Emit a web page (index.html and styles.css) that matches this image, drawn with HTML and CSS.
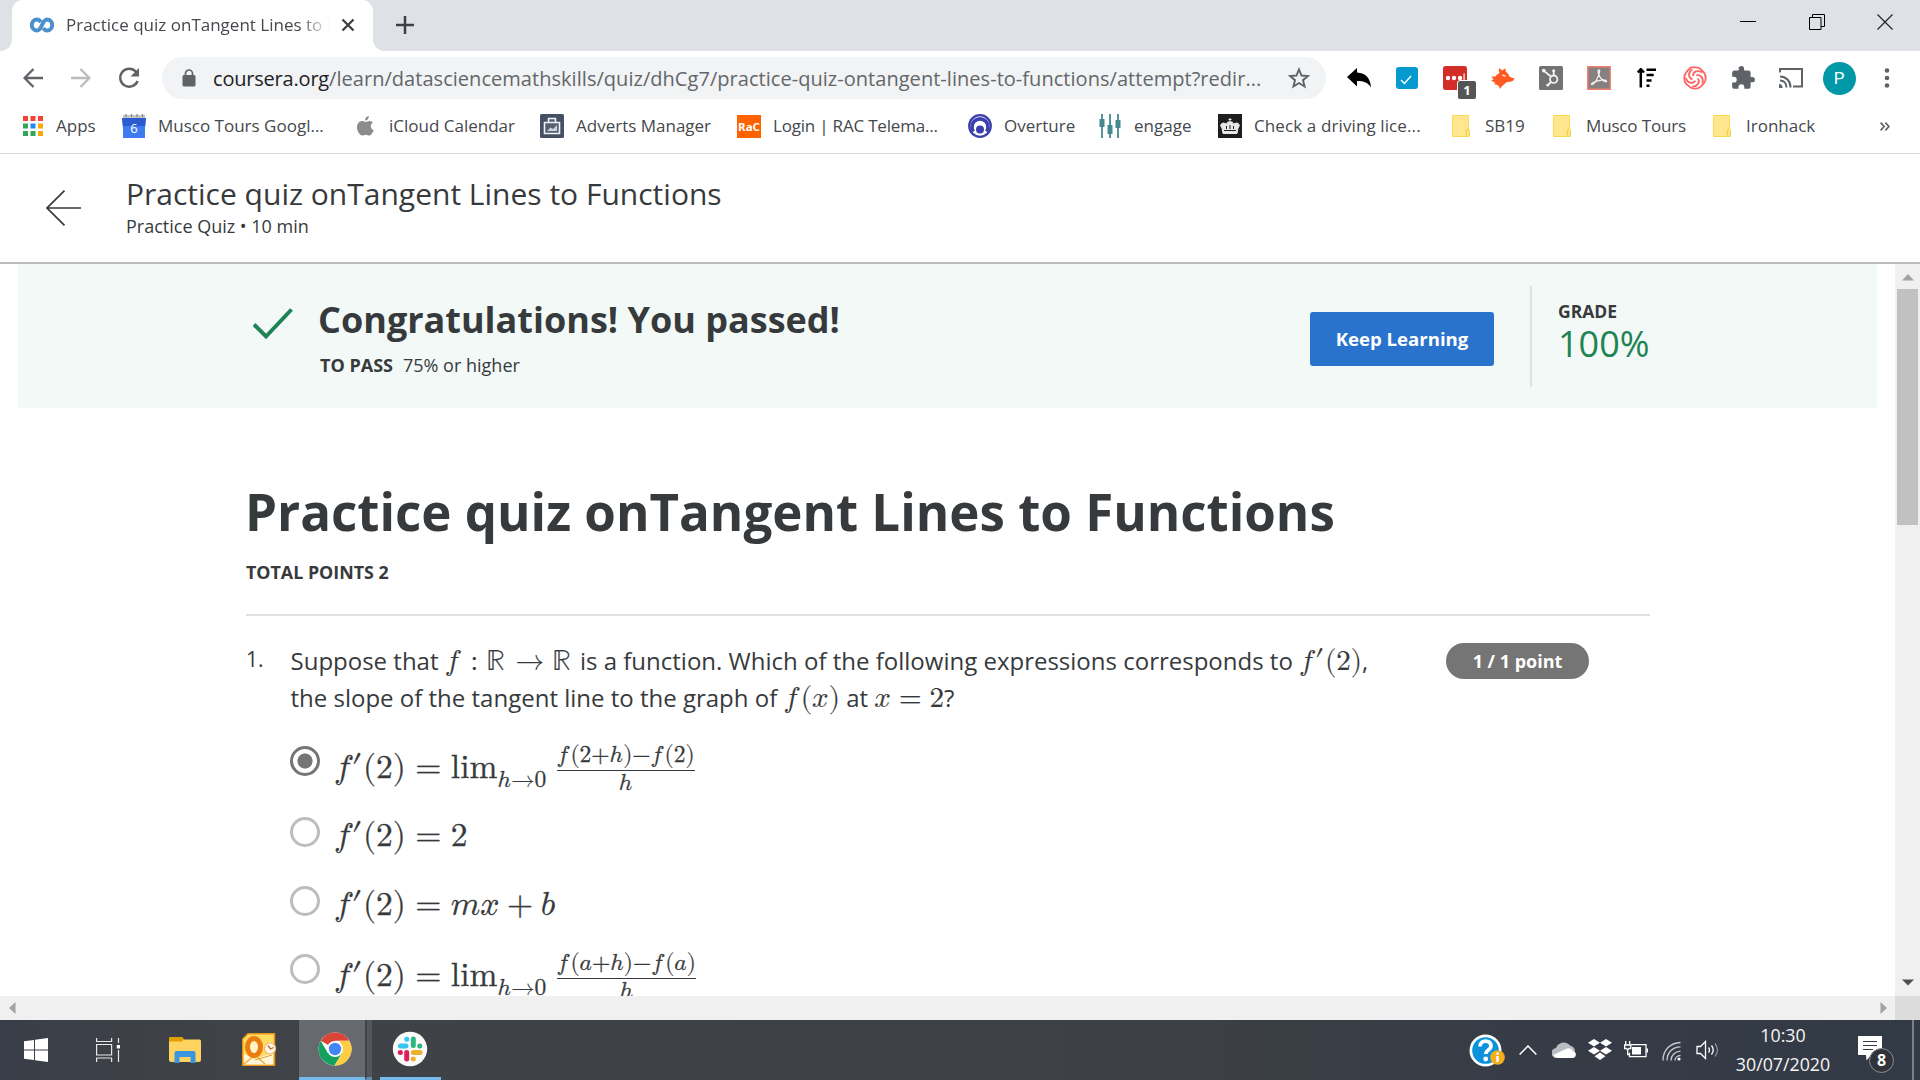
FILE: index.html
```html
<!DOCTYPE html>
<html lang="en">
<head>
<meta charset="utf-8">
<title>Practice quiz onTangent Lines to Functions</title>
<link rel="stylesheet" href="styles.css">
</head>
<body>
<div class="screen">

<header class="tabstrip">
  <div class="tab">
    <svg class="fav" width="24" height="16" viewBox="0 0 24 16" fill="none" stroke="#4a90cd" stroke-width="4"><path d="M11 5C9.500 3 8.500 2.400 7 2.400a5.200 5.600 0 0 0 0 11.200C12 13.600 12 2.400 17 2.400a5.200 5.600 0 0 1 0 11.200c-1.600 0-2.600-.7-3.800-2.400"/></svg>
    <span class="tab-title">Practice quiz onTangent Lines to F</span>
    <svg width="14" height="14" viewBox="0 0 14 14" stroke="#3c4043" stroke-width="2.300"><path d="M1.500 1.500l11 11M12.500 1.500l-11 11"/></svg>
  </div>
  <svg class="plus" width="18" height="18" viewBox="0 0 18 18" stroke="#3c4043" stroke-width="2.500"><path d="M9 0v18M0 9h18"/></svg>
  <div class="wincontrols">
    <svg width="16" height="16" viewBox="0 0 16 16" stroke="#000" fill="none"><path d="M0 7.500h16"/></svg>
    <svg width="16" height="16" viewBox="0 0 16 16" stroke="#000" fill="none"><path d="M.5 3.500h11.500v12H.5zM3.500 3.500V.5h12v12H12"/></svg>
    <svg width="16" height="16" viewBox="0 0 16 16" stroke="#222" fill="none" stroke-width="1.200"><path d="M.5.5l15 15M15.500.5l-15 15"/></svg>
  </div>
</header>

<div class="toolbar">
  <div class="nav">
    <svg width="20" height="20" viewBox="0 0 20 20" fill="none" stroke="#5f6368" stroke-width="2.300"><path d="M20 10H2M10.500 1L1.600 10l8.900 9"/></svg>
    <svg width="20" height="20" viewBox="0 0 20 20" fill="none" stroke="#b9bbbe" stroke-width="2.300"><path d="M0 10h18M9.500 1l8.900 9-8.900 9"/></svg>
    <svg width="22" height="22" viewBox="0 0 22 22"><path d="M18 4.800A9 9 0 1 0 19.600 14" fill="none" stroke="#5f6368" stroke-width="2.400"/><path d="M21 1v8.500h-8.500z" fill="#5f6368"/></svg>
  </div>
  <div class="omnibox">
    <svg width="14" height="18" viewBox="0 0 14 18"><rect x="0.500" y="6" width="13" height="11.500" rx="1.500" fill="#5f6368"/><path d="M3.500 7V4.500a3.500 3.500 0 0 1 7 0V7" fill="none" stroke="#5f6368" stroke-width="1.700"/></svg>
    <span class="url"><b>coursera.org</b>/learn/datasciencemathskills/quiz/dhCg7/practice-quiz-ontangent-lines-to-functions/attempt?redir...</span>
    <svg width="22" height="22" viewBox="0 0 22 22" fill="none" stroke="#5f6368" stroke-width="1.900"><path d="M11 2.500l2.500 6 6.500.5-5 4.200 1.600 6.300L11 16l-5.600 3.500L7 13.200 2 9l6.500-.5z"/></svg>
  </div>
  <div class="exts">
    <svg width="24" height="20" viewBox="0 0 24 20"><path d="M0 9L10 0v4.500C19 5 23.500 10.500 24 19.500 21 14.500 17 13 10 13v5.500z" fill="#000"/></svg>
    <svg width="22" height="22" viewBox="0 0 22 22"><rect width="22" height="22" rx="3" fill="#049acf"/><path d="M5 13l3.500 3.500L15 9" fill="none" stroke="#fff" stroke-width="1.500"/></svg>
    <div class="lp">
      <svg width="24" height="24" viewBox="0 0 24 24"><rect width="24" height="24" rx="2.500" fill="#d32d27"/><g fill="#fff"><circle cx="5" cy="12" r="2.200"/><circle cx="11" cy="12" r="2.200"/><circle cx="17" cy="12" r="2.200"/><path d="M20.500 7.500h1.200v9h-1.200z"/></g></svg>
      <span class="lp-badge">1</span>
    </div>
    <svg width="24" height="21" viewBox="0 0 24 21"><path d="M8.500 0l2.500 2.600L14.500.3l.3 3.400c2.700 1.300 2.700 3.600 4.200 5.300l4.500 1.500c-.5 2.500-3 3.300-5.500 3.300-3 0-3.500 1.700-5.500 3L8.500 21c.2-2-.5-3.300-2-4l-3.500-.8 1.500-1.200L0 12.500l2.500-.8L.5 8.500h4C5 7 7 6 8.500 5c-1-1.500-1-3.500 0-5z" fill="#ff5a21"/><path d="M11.500 7.200l3 1" stroke="#fff" stroke-width="1.400"/></svg>
    <svg width="24" height="24" viewBox="0 0 24 24"><rect width="24" height="24" rx="1.500" fill="#737373"/><g fill="none" stroke="#f0f0f0" stroke-width="1.800"><circle cx="14.700" cy="13.200" r="3.700"/><path d="M12 10.500L5 5M14.700 9.500V5M12 16l-3 3"/></g><g fill="#f0f0f0"><circle cx="4.800" cy="4.600" r="1.900"/><circle cx="14.700" cy="4.800" r="1.600"/><circle cx="8.700" cy="19.200" r="1.400"/></g></svg>
    <svg width="24" height="24" viewBox="0 0 24 24"><rect x="0.700" y="0.700" width="22.600" height="22.600" fill="#878080" stroke="#f5806f" stroke-width="1.500"/><path d="M4.500 18.500c-1.200-2 14-6.500 15-3.500.5 2.500-8-2-8.500-10 0-1.600 1.700-1.600 1.700 0C12.500 10 7 19.500 4.500 18.500z" fill="none" stroke="#f5f0f0" stroke-width="1.300"/></svg>
    <svg width="20" height="20" viewBox="0 0 20 20"><path d="M3.800 19.500V2M.7 4.500L3.800 1.200 7 4.500M9.500 1.700H19M9.500 7h7.200M9.500 12.500h5M9.500 17.800h3" fill="none" stroke="#000" stroke-width="2.500"/></svg>
    <svg width="24" height="24" viewBox="0 0 24 24" fill="none" stroke="#ff6363" stroke-width="1.800"><path d="M8 1.300h5.500c2 0 3 .8 4.500 2.200l3 3.200c1.700 2 1.700 3.500 1.700 5.500s-.2 3.500-1.700 5l-3.500 3.600c-2 1.800-3.200 1.900-5.500 1.900s-3.600-.2-5-1.500L3 17.600c-1.500-1.600-1.700-3-1.700-5.400S1.700 8 3 6.600l3-3.400C7 2 8 1.300 8 1.300z"/><path d="M10 10C10 5.500 14.500 3.500 19.500 6.500"/><path d="M10 10C10 5.500 14.500 3.500 19.500 6.500" transform="rotate(72 12 12)"/><path d="M10 10C10 5.500 14.500 3.500 19.500 6.500" transform="rotate(144 12 12)"/><path d="M10 10C10 5.500 14.500 3.500 19.500 6.500" transform="rotate(216 12 12)"/><path d="M10 10C10 5.500 14.500 3.500 19.500 6.500" transform="rotate(288 12 12)"/></svg>
    <svg width="26" height="26" viewBox="0 0 24 24" fill="#5f6368"><path d="M20.500 11H19V7c0-1.100-.9-2-2-2h-4V3.500a2.500 2.500 0 0 0-5 0V5H4c-1.100 0-2 .9-2 2v3.800h1.500a2.700 2.700 0 0 1 0 5.400H2V20c0 1.100.9 2 2 2h3.800v-1.500a2.700 2.700 0 0 1 5.400 0V22H17c1.100 0 2-.9 2-2v-4h1.500a2.500 2.500 0 0 0 0-5z"/></svg>
    <svg width="24" height="20" viewBox="0 0 24 20" fill="none" stroke="#5f6368" stroke-width="2"><path d="M1 4.500V1h22v17.500h-9M1 8.500c6 0 10.500 4.500 10.500 11M1 12.500c4 0 6.500 3 6.500 7"/><path d="M0 16c2.200 0 3.600 1.600 3.600 4H0z" fill="#5f6368" stroke="none"/></svg>
    <span class="avatar">P</span>
    <svg width="6" height="20" viewBox="0 0 6 20" fill="#5f6368"><circle cx="3" cy="2.500" r="2.300"/><circle cx="3" cy="10" r="2.300"/><circle cx="3" cy="17.500" r="2.300"/></svg>
  </div>
</div>

<nav class="bookmarks">
  <a><svg width="20" height="20" viewBox="0 0 20 20"><g fill="#f44336"><path d="M0 0h5v5H0zM7.500 0h5v5h-5zM15 0h5v5h-5z"/></g><path d="M0 7.500h5v5H0zM0 15h5v5H0zM7.500 15h5v5h-5z" fill="#34a457"/><path d="M7.500 7.500h5v5h-5z" fill="#1e88f5"/><path d="M15 7.500h5v5h-5zM15 15h5v5h-5z" fill="#fba809"/></svg><span>Apps</span></a>
  <a><svg width="24" height="24" viewBox="0 0 24 24"><path d="M1 1h22v4H1z" fill="#c6c6c6"/><path d="M4 0v3M9.500 0v3M15 0v3M20.500 0v3" stroke="#8b8b8b" stroke-width="1.300"/><path d="M0 4h24l-1 10v10H1V14z" fill="#3f7bf0"/><path d="M0 4h24l-.9 8H.9z" fill="#2a5bd0"/><text x="12" y="18.500" text-anchor="middle" font-size="13" fill="#fff">6</text></svg><span>Musco Tours Googl...</span></a>
  <a><svg width="17" height="20" viewBox="0 0 17 20" fill="#8b8b8b"><path d="M11.800 0c.2 2.500-1.500 4.500-3.800 4.500C7.800 2.300 9.600.3 11.800 0zM15.800 6.800c-3 2-2.600 6 .9 7.400-1.200 3-2.700 5.300-4.400 5.300-1.300 0-1.900-.8-3.600-.8s-2.200.8-3.500.8C2.600 19.500 0 15 0 11.300 0 7.500 2.300 5 5 5c1.600 0 2.700 1 3.800 1s2.400-1.100 4.200-1c1.100 0 2.200.7 2.800 1.800z"/></svg><span>iCloud Calendar</span></a>
  <a><svg width="24" height="24" viewBox="0 0 24 24"><rect width="24" height="24" rx="1.500" fill="#454f63"/><path d="M8.500 8V4.500h7V8M4.500 8.500h15v11h-15z" fill="#566074" stroke="#eef1f5" stroke-width="1.600"/><path d="M7 17l3.500-3.500 2.500 1.500 4-4v6z" fill="#cdd2da"/></svg><span>Adverts Manager</span></a>
  <a><svg width="24" height="23" viewBox="0 0 24 23"><rect width="24" height="23" fill="#ff6300"/><text x="12" y="15.500" text-anchor="middle" textLength="22" lengthAdjust="spacingAndGlyphs" font-size="11" font-weight="700" fill="#fff">RaC</text></svg><span class="rac">Login | RAC Telema...</span></a>
  <a><svg width="24" height="24" viewBox="0 0 24 24"><circle cx="12" cy="12" r="10.800" fill="#fff" stroke="#3c3fae" stroke-width="2.200"/><path d="M5.500 17.500a8 8 0 1 1 13 0" fill="none" stroke="#3c3fae" stroke-width="3.600"/><circle cx="12" cy="15.500" r="4" fill="#3c3fae"/></svg><span>Overture</span></a>
  <a><svg width="22" height="24" viewBox="0 0 22 24" stroke="#45898f"><path d="M3 0v24M11 0v24M19 0v24" stroke-width="1.800"/><path d="M3 5v8M11 11v9M19 6v8" stroke-width="5"/></svg><span>engage</span></a>
  <a><svg width="24" height="24" viewBox="0 0 24 24"><rect width="24" height="24" fill="#1f1d1f"/><path d="M5 19.500L4 14c-3-3 0-6 3-4.500l3 .5-.5-2h5l-.5 2 3-.5c3-1.500 6 1.500 3 4.500l-1 5.500zM12 4v4M10.500 5.500h3" fill="#e8e8e8" stroke="#e8e8e8"/><path d="M6 16.500h12M8.500 12v3M12 11v4M15.500 12v3" stroke="#1f1d1f"/></svg><span class="driving">Check a driving lice...</span></a>
  <a><svg width="18" height="22" viewBox="0 0 18 22"><path d="M.5.500h16v21H.5z" fill="#ffe68f" stroke="#f9d94e"/><rect x="14.200" y="14.500" width="3.200" height="7" rx="1" fill="#ffe68f" stroke="#f0cd3c"/></svg><span>SB19</span></a>
  <a><svg width="18" height="22" viewBox="0 0 18 22"><path d="M.5.500h16v21H.5z" fill="#ffe68f" stroke="#f9d94e"/><rect x="14.200" y="14.500" width="3.200" height="7" rx="1" fill="#ffe68f" stroke="#f0cd3c"/></svg><span class="musco">Musco Tours</span></a>
  <a><svg width="18" height="22" viewBox="0 0 18 22"><path d="M.5.500h16v21H.5z" fill="#ffe68f" stroke="#f9d94e"/><rect x="14.200" y="14.500" width="3.200" height="7" rx="1" fill="#ffe68f" stroke="#f0cd3c"/></svg><span>Ironhack</span></a>
  <a><svg width="10" height="9" viewBox="0 0 10 9" fill="none" stroke="#5f6368" stroke-width="1.700"><path d="M.6.600l3.500 3.900L.6 8.400M5.400.600l3.500 3.900-3.500 3.900"/></svg></a>
</nav>

<header class="quizhead">
  <svg width="36" height="36" viewBox="0 0 36 36" fill="none" stroke="#373a3c" stroke-width="1.700"><path d="M35 18H1M18.500.700L1 18l17.500 17.300"/></svg>
  <div>
    <div class="quiz-name">Practice quiz onTangent Lines to Functions</div>
    <div class="quiz-meta">Practice Quiz • 10 min</div>
  </div>
</header>

<div class="viewport">
  <main class="page">
    <section class="banner">
      <svg class="tick" width="42" height="34" viewBox="0 0 42 34"><path d="M2 17.500l12 12L39.500 2.500" fill="none" stroke="#1f8354" stroke-width="4"/></svg>
      <div class="congrats">
        <h2>Congratulations! You passed!</h2>
        <p><b>TO PASS</b>75% or higher</p>
      </div>
      <button class="keep">Keep Learning</button>
      <div class="grade"><b>GRADE</b><span>100%</span></div>
    </section>

    <section class="quiz">
      <h1>Practice quiz onTangent Lines to Functions</h1>
      <div class="points">TOTAL POINTS 2</div>
      <div class="question">
        <div class="qnum">1.</div>
        <div class="qbody">
          <p class="prompt">Suppose that <math><mi>f</mi><mo lspace="0.386em" rspace="0.278em">:</mo><mi>ℝ</mi><mspace width="0.085em"/><mo>→</mo><mi>ℝ</mi><mspace width="0.1em"/></math> is a function. Which of the following expressions corresponds to <math><mi>f</mi><mo lspace="0.06em" rspace="0.03em">′</mo><mo stretchy="false">(</mo><mn>2</mn><mo stretchy="false">)</mo></math>,<br>the slope of the tangent line to the graph of <math><mi>f</mi><mo stretchy="false" lspace="0.108em">(</mo><mi>x</mi><mo stretchy="false">)</mo></math> at <math><mi>x</mi><mo>=</mo><mn>2</mn></math>?</p>
          <div class="options">
            <label class="option frac"><i class="radio on"></i><math><mi>f</mi><mo lspace="0.04em" rspace="0.02em">′</mo><mo stretchy="false">(</mo><mn>2</mn><mo stretchy="false">)</mo><mo>=</mo><msub><mi>lim</mi><mrow><mi>h</mi><mo lspace="0" rspace="0">→</mo><mn>0</mn></mrow></msub><mspace width="0.22em"/><mfrac><mrow><mi>f</mi><mo stretchy="false" lspace="0.1em">(</mo><mn>2</mn><mo lspace="0" rspace="0">+</mo><mi>h</mi><mo stretchy="false">)</mo><mo lspace="0" rspace="0">−</mo><mi>f</mi><mo stretchy="false" lspace="0.1em">(</mo><mn>2</mn><mo stretchy="false">)</mo></mrow><mi>h</mi></mfrac></math></label>
            <label class="option"><i class="radio"></i><math><mi>f</mi><mo lspace="0.04em" rspace="0.02em">′</mo><mo stretchy="false">(</mo><mn>2</mn><mo stretchy="false">)</mo><mo>=</mo><mn>2</mn></math></label>
            <label class="option"><i class="radio"></i><math><mi>f</mi><mo lspace="0.04em" rspace="0.02em">′</mo><mo stretchy="false">(</mo><mn>2</mn><mo stretchy="false">)</mo><mo>=</mo><mi>m</mi><mi>x</mi><mo>+</mo><mi>b</mi></math></label>
            <label class="option frac"><i class="radio"></i><math><mi>f</mi><mo lspace="0.04em" rspace="0.02em">′</mo><mo stretchy="false">(</mo><mn>2</mn><mo stretchy="false">)</mo><mo>=</mo><msub><mi>lim</mi><mrow><mi>h</mi><mo lspace="0" rspace="0">→</mo><mn>0</mn></mrow></msub><mspace width="0.22em"/><mfrac><mrow><mi>f</mi><mo stretchy="false" lspace="0.1em">(</mo><mi>a</mi><mo lspace="0" rspace="0">+</mo><mi>h</mi><mo stretchy="false">)</mo><mo lspace="0" rspace="0">−</mo><mi>f</mi><mo stretchy="false" lspace="0.1em">(</mo><mi>a</mi><mo stretchy="false">)</mo></mrow><mi>h</mi></mfrac></math></label>
          </div>
        </div>
        <div class="pill">1 / 1 point</div>
      </div>
    </section>
  </main>
  <div class="vbar">
    <svg width="12" height="8" viewBox="0 0 12 8"><path d="M6 1l6 6.500H0z" fill="#a3a3a3"/></svg>
    <div class="thumb"></div>
    <svg class="down" width="12" height="7" viewBox="0 0 12 7"><path d="M0 .5h12L6 6.500z" fill="#505050"/></svg>
  </div>
  <div class="hbar">
    <svg width="7" height="12" viewBox="0 0 7 12"><path d="M6.500 0v12L0 6z" fill="#a3a3a3"/></svg>
    <svg width="7" height="12" viewBox="0 0 7 12"><path d="M.5 0v12L7 6z" fill="#a3a3a3"/></svg>
  </div>
  <div class="corner"></div>
</div>

<footer class="taskbar">
  <div class="task"><svg width="24" height="24" viewBox="0 0 24 24" fill="#fff"><path d="M0 3.300L10 2v9.500H0zM11 1.800L24 0v11.500H11zM0 12.500h10V22L0 20.700zM11 12.500h13V24l-13-1.800z"/></svg></div>
  <div class="task"><svg width="24" height="24" viewBox="0 0 24 24" fill="none" stroke="#e8e8e8" stroke-width="1.200"><path d="M.6 0v3.500h15V0M.6 6.500h15v10.500H.6zM.6 24v-4h15v4M22.500 0v5M22.500 12v12"/><path d="M20.800 7h3.200v3.500h-3.200z" fill="#fff" stroke="none"/></svg></div>
  <div class="task"><svg width="32" height="26" viewBox="0 0 32 26"><path d="M0 1.500Q0 0 1.500 0H13l2 2.500h15.500Q32 2.500 32 4v19q0 2-2 2H2q-2 0-2-2z" fill="#ffd35f"/><path d="M0 1.500Q0 0 1.500 0H13l2 2.500-2 2H0z" fill="#e2a000"/><path d="M5.500 26V16q0-2 2-2h17q2 0 2 2v10h-5v-6h-11v6z" fill="#3b94de"/></svg></div>
  <div class="task"><svg width="34" height="33" viewBox="0 0 34 33"><path d="M6 .7h26.500v31.500H.7V6z" fill="#ffdc62" stroke="#e8951a" stroke-width="1.500"/><path d="M2 21l10 5 19-6v11.500H2z" fill="#fff6dc"/><path d="M2 31l11-9 10 9M13 27l17-5" fill="none" stroke="#eda52c" stroke-width="1.200"/><ellipse cx="12" cy="14" rx="6.500" ry="8.500" fill="#fff3c4" stroke="#ea7d12" stroke-width="5"/><circle cx="28" cy="15.500" r="5.500" fill="#fff8ea" stroke="#f2b76d" stroke-width="1.200"/><path d="M26 12.500l2.500 3.500 3-1.500" fill="none" stroke="#b16a2a" stroke-width="1.300"/></svg></div>
  <div class="task active"><svg width="34" height="34" viewBox="0 0 34 34"><circle cx="17" cy="17" r="16.500" fill="#fff"/><path d="M17 17L2.700 8.700A16.500 16.500 0 0 1 31.300 8.700H17z" fill="#db4437"/><path d="M2.700 8.700A16.500 16.500 0 0 0 16.500 33.500L24.200 21 17 17 9.800 21z" fill="#14a05f"/><path d="M31.300 8.700A16.500 16.500 0 0 1 16.500 33.500L24.200 21 22 10V8.700z" fill="#ffcd42"/><circle cx="17" cy="17" r="8" fill="#fff"/><circle cx="17" cy="17" r="6.200" fill="#4285f4"/></svg></div>
  <div class="stack"></div>
  <div class="task open"><svg width="36" height="36" viewBox="0 0 36 36"><circle cx="18" cy="18" r="17.200" fill="#fafafa"/><g fill="none" stroke-width="5" stroke-linecap="round"><path d="M8.500 15H14M14.700 8.300h.1" stroke="#36c5f0"/><path d="M21.300 8v6.500M27.800 15h-.1" stroke="#2eb67d"/><path d="M21.500 21.500H28M21.300 28v-.1" stroke="#ecb22e"/><path d="M14.700 21.500V28M8.300 21.500h.1" stroke="#e01e5a"/></g></svg></div>
  <div class="tray">
    <svg class="help" width="36" height="34" viewBox="0 0 36 34"><circle cx="16.500" cy="16.500" r="16" fill="#fff"/><circle cx="16.500" cy="16.500" r="13.300" fill="#0a93dc"/><path d="M11 12.500c0-7 11-7 11-.5 0 4-5.300 4-5.300 8" fill="none" stroke="#fff" stroke-width="3.800"/><circle cx="16.700" cy="25" r="2.400" fill="#fff"/><circle cx="28.500" cy="23.500" r="7.300" fill="#f5ae1d"/><path d="M28.500 22v6M28.500 18.500v2.300" stroke="#fff" stroke-width="2.400"/></svg>
    <svg width="18" height="10" viewBox="0 0 18 10" fill="none" stroke="#fff" stroke-width="1.500"><path d="M.6 9.500L9 1l8.400 8.500"/></svg>
    <svg width="24" height="16" viewBox="0 0 24 16"><path d="M5 16A5 5 0 0 1 4 6C6 1 13-2 18 3.500 22 5 23 7 23 9z" fill="#b9bcc0"/><path d="M6 16a5.500 5.500 0 0 1-5-3L14 7c2-1.500 6-.5 6.500 2 4.500 0 4.500 7 0 7z" fill="#fff"/></svg>
    <svg width="24" height="22" viewBox="0 0 24 22" fill="#fff"><path d="M6 0l6 3.800L6 7.600 0 3.800zM18 0l6 3.800-6 3.800-6-3.800zM6 8l6 3.800-6 3.800-6-3.800zM18 8l6 3.800-6 3.800-6-3.800zM12 13.500l5.500 3.800L12 21l-5.500-3.700z"/></svg>
    <svg width="24" height="18" viewBox="0 0 24 18" fill="none" stroke="#fff" stroke-width="1.300"><path d="M7 3.700h15v12H5.500v-4M23.400 7.500v4M1.700 0v4M5.700 0v4M.6 4h6.200v3.500H5L3.700 9 2.400 7.500H.6zM3.700 9v4.500H6"/><path d="M8 6h9v7.500H8z" fill="#fff" stroke="none"/></svg>
    <svg class="wifi" width="20" height="20" viewBox="0 0 20 20" fill="none" stroke="#c9ccd0" stroke-width="1.300"><path d="M1 19.500C1 9 8 2 18.500 1.500M5 19.500C5 11.500 10.500 6 18.500 5.800M9 19.500c0-5 4-9 9.500-9.300M13 19.500c0-3 2.500-5 5.500-5"/><circle cx="17" cy="18" r="1.600" fill="#fff" stroke="none"/></svg>
    <svg width="24" height="20" viewBox="0 0 24 20" fill="none" stroke="#fff" stroke-width="1.300"><path d="M1 6.500h3.500L9.500 1.500v17l-5-5H1zM12.500 7.500q2 2.500 0 5M15.500 5.500q3.500 4.500 0 9"/><path d="M19 3.500q5 6.500 0 13" stroke="#8b9097"/></svg>
    <div class="clock"><span>10:30</span><span>30/07/2020</span></div>
    <div class="notes"><svg width="24" height="25" viewBox="0 0 24 25"><path d="M0 0h24v19H13l-4.500 5.500L8 19H0z" fill="#fff"/><path d="M5 5.500h14M5 9.500h14M5 13.500h10" stroke="#363c46" stroke-width="1.200"/></svg><span class="count">8</span></div>
  </div>
  <div class="peek"></div>
</footer>
</div>
</body>
</html>
```
FILE: styles.css
```css
* { box-sizing: border-box; }
body { margin: 0; font-family: "Open Sans", "Noto Sans", sans-serif; color: #373a3c; }
h1, h2, p { margin: 0; }
svg { display: block; flex: none; }
.screen { width: 1920px; height: 1080px; overflow: hidden; display: flex; flex-direction: column; background: #fff; }

/* Tab strip */
.tabstrip { height: 51px; flex: none; background: #dee1e6; display: flex; align-items: center; padding-left: 12px; }
.tab { width: 361px; height: 51px; background: #fff; border-radius: 11px 11px 0 0; display: flex; align-items: center; padding: 0 18px 2px; position: relative; }
.tab::before, .tab::after { content: ""; position: absolute; bottom: 0; width: 11px; height: 11px; }
.tab::before { left: -11px; background: radial-gradient(circle at 0 0, transparent 10.500px, #fff 11px); }
.tab::after { right: -11px; background: radial-gradient(circle at 100% 0, transparent 10.500px, #fff 11px); }
.tab-title { width: 264px; margin: 0 11px 0 12px; overflow: hidden; white-space: nowrap; font-size: 17px; line-height: 24px; color: #45484c; -webkit-mask-image: linear-gradient(90deg, #000 232px, transparent 264px); mask-image: linear-gradient(90deg, #000 232px, transparent 264px); }
.plus { margin: 0 0 2px 23px; }
.wincontrols { margin: 0 0 8px auto; width: 206px; display: grid; grid-template-columns: repeat(3, 68.500px); justify-items: center; }

/* Address bar */
.toolbar { height: 54px; flex: none; display: flex; align-items: center; padding-left: 23px; }
.nav { width: 139px; display: flex; gap: 28px; }
.nav svg:last-child { margin: -1px 0 0 -1px; }
.omnibox { width: 1164px; height: 42px; border-radius: 21px; background: #f1f3f4; display: flex; align-items: center; padding: 0 16px 0 20px; }
.url { margin-left: 17px; flex: 1; font-size: 20px; line-height: 28px; color: #63676b; white-space: nowrap; letter-spacing: .040px; padding-top: 1px; }
.url b { font-weight: 400; color: #202124; letter-spacing: -.200px; }
.exts { margin-left: 9px; display: grid; grid-template-columns: repeat(12, 48px); align-items: center; justify-items: center; }
.lp { position: relative; }
.lp-badge { position: absolute; left: 14px; top: 14px; width: 20px; height: 20px; border: 1px solid #fff; border-radius: 3px; background: #555; color: #fff; font: 700 13px/18px "Open Sans", sans-serif; text-align: center; }
.avatar { width: 33px; height: 33px; border-radius: 50%; background: #0097a7; color: #fff; font: 400 17px/33px Roboto, sans-serif; text-align: center; }

/* Bookmarks */
.bookmarks { height: 49px; flex: none; border-bottom: 1px solid #d9dbde; padding: 0 0 6px 23px; display: grid; grid-template-columns: 99px 235px 183px 197px 231px 131px 119px 234px 101px 160px 167px 20px; align-items: center; font-size: 17px; color: #45484c; }
.bookmarks a { display: flex; align-items: center; white-space: nowrap; line-height: 24px; }
.bookmarks svg + span { margin-left: 12px; }
.bookmarks a:nth-child(1) svg + span, .bookmarks a:nth-child(7) svg + span { margin-left: 13px; }
.bookmarks a:nth-child(n+9) svg + span, .bookmarks a:nth-child(3) svg + span { margin-left: 15px; }
.rac { letter-spacing: -.200px; }
.driving { letter-spacing: .110px; }
.musco { letter-spacing: -.150px; }

/* Quiz header */
.quizhead { height: 110px; flex: none; border-bottom: 2px solid #bbb; display: flex; align-items: center; gap: 44px; padding-left: 46px; }
.quiz-name { font-size: 30px; line-height: 36px; margin-top: -2px; padding-bottom: 1px; }
.quiz-meta { font-size: 18px; line-height: 26px; }

/* Scrolling page area */
.viewport { flex: 1; min-height: 0; display: grid; grid-template: 732px 24px / 1895px 25px; }
.page { overflow: hidden; padding: 0 18px; }
.banner { height: 144px; background: #f3f9f7; display: flex; align-items: flex-start; padding-left: 234px; }
.tick { margin-top: 43px; }
.congrats { margin-left: 24px; width: 992px; padding-top: 31px; }
.congrats h2 { font-size: 36px; line-height: 50px; }
.congrats p { padding-left: 2px; margin-top: 8px; font-size: 18px; line-height: 24px; }
.congrats b { margin-right: 10px; }
.keep { width: 184px; height: 54px; margin-top: 48px; border: 0; border-radius: 3px; background: #2a73cc; color: #fff; font: 700 18.600px "Open Sans", sans-serif; padding: 0 0 2px; }
.grade { margin: 22px 0 0 36px; height: 101px; border-left: 2px solid #dce2e0; padding: 12px 0 0 26px; }
.grade b { display: block; font-size: 17.500px; font-weight: 700; line-height: 26px; }
.grade span { display: block; font-size: 36px; line-height: 39px; color: #1f8354; }

/* Quiz */
.quiz { width: 1404px; margin-left: 228px; padding-top: 68px; }
h1 { font-size: 51.050px; line-height: 70px; white-space: nowrap; margin-left: -1px; }
.points { font-size: 17.850px; font-weight: 700; line-height: 26px; padding: 13px 0 29px; border-bottom: 2px solid #e1e1e1; }
.question { display: flex; align-items: flex-start; }
.qnum { width: 44px; padding-top: 25px; font-size: 21px; line-height: 37px; }
.qbody { width: 1156px; }
.prompt { padding: 26px 0 0 .500px; font-size: 24px; line-height: 37px; white-space: nowrap; }
.prompt math { font-size: 29px; line-height: 1; -webkit-text-stroke: .200px; }
.pill { width: 143px; height: 36px; margin-top: 27px; border-radius: 18px; background: #757575; color: #fff; font-size: 18px; font-weight: 700; line-height: 36px; text-align: center; }
.options { display: grid; grid-template-rows: 71px 69px 68px 90px; padding-top: 12px; }
.option { display: flex; align-items: flex-start; }
.option math { font-size: 33.600px; margin: 21px 0 0 14px; -webkit-text-stroke: .300px; }
.option.frac math { margin-top: 16px; }
.radio { width: 30px; height: 30px; border: 3px solid #bdbdbd; border-radius: 50%; display: block; margin-top: 18px; }
.radio.on { border-color: #757575; background: radial-gradient(circle, #757575 7.200px, transparent 7.900px); }

/* Scrollbars */
.vbar { background: #f0f0f0; display: flex; flex-direction: column; align-items: center; padding: 9px 0 10px; }
.thumb { width: 21px; height: 236px; margin-top: 8px; background: #c1c1c1; }
.down { margin-top: auto; }
.hbar { background: #f0f0f0; display: flex; align-items: center; justify-content: space-between; padding: 0 8px 0 9px; }
.corner { background: #dcdcdc; }

/* Taskbar */
.taskbar { height: 60px; flex: none; display: flex; background: linear-gradient(90deg, #3a3e48, #3f4246 12%, #3d4045 60%, #363c46 80%, #323a46); }
.task { width: 74px; display: flex; align-items: center; justify-content: center; }
.task:nth-child(1) { width: 72px; }
.task:nth-child(2) { width: 72px; }
.task:nth-child(3) { width: 82px; }
.task:nth-child(4) { width: 66px; margin-right: 7px; }
.task:nth-child(4) svg { margin-top: -2px; }
.task.active { width: 66px; padding-left: 6px; border-bottom: 3px solid #76b9ed; background: #66696e; }
.stack { width: 7px; border-left: 2px solid #3f4247; border-bottom: 3px solid #5d8db3; background: #53565a; }
.task.open { width: 61px; margin-left: 8px; padding-right: 2px; border-bottom: 3px solid #76b9ed; }
.tray { flex: 1; display: flex; align-items: center; padding-left: 1028px; }
.tray > svg { margin-right: 12px; }
.tray .help { margin: 2px 14px 0 0; }
.tray > svg:nth-child(2) { margin-right: 15px; }
.tray .wifi { margin: 2px 14px 0 2px; }
.clock { width: 114px; margin-left: -6px; font-size: 17.800px; line-height: 29px; color: #f5f5f5; display: flex; flex-direction: column; align-items: center; }
.notes { margin: -3px 0 0 18px; position: relative; }
.count { position: absolute; left: 11px; top: 12px; width: 25px; height: 25px; border-radius: 50%; border: 1px solid #8a8d92; background: #303339; color: #fff; font-size: 16px; font-weight: 700; line-height: 23px; text-align: center; }
.peek { width: 8px; border-left: 2px solid #7c8188; }
```
